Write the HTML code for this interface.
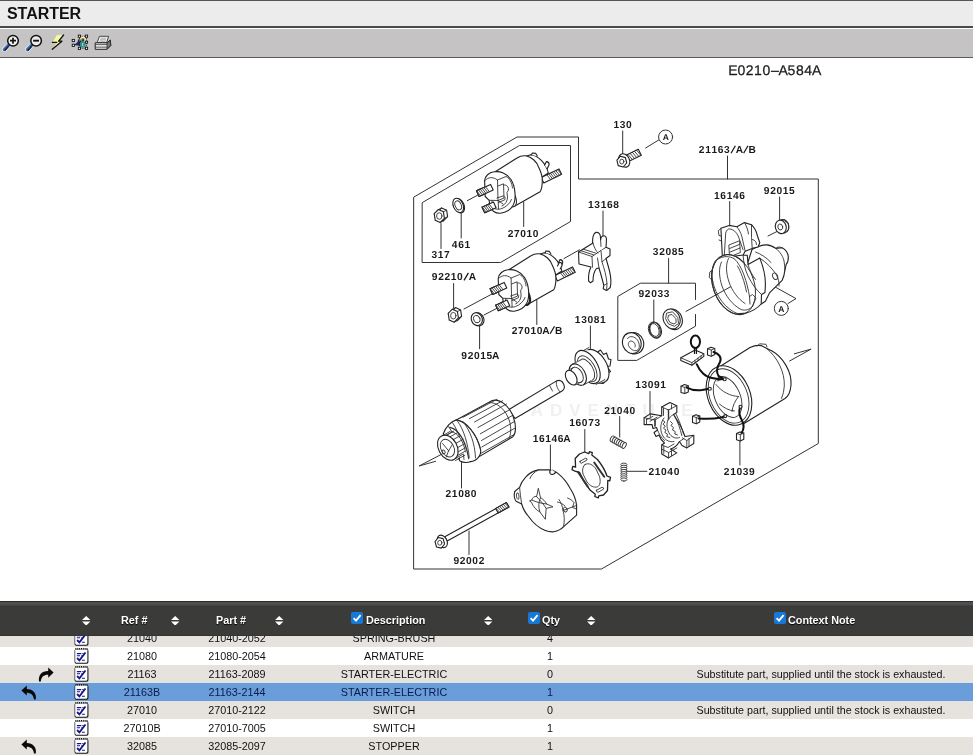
<!DOCTYPE html>
<html>
<head>
<meta charset="utf-8">
<style>
html,body{margin:0;padding:0;background:#fff;}
body{width:973px;height:755px;overflow:hidden;position:relative;font-family:"Liberation Sans",sans-serif;}
#title{position:absolute;left:0;top:0;width:973px;height:28px;background:#ececec;border-top:1px solid #55555a;border-bottom:2px solid #4a4a4c;box-sizing:border-box;}
#title span{position:absolute;left:6.8px;top:4px;font-size:16px;font-weight:bold;color:#111;letter-spacing:-0.05px;line-height:18px;}
#toolbar{position:absolute;left:0;top:29px;width:973px;height:29px;background:#c5c3c4;border-bottom:1px solid #5a5a5a;box-sizing:border-box;}
#diagram{position:absolute;left:0;top:58px;width:973px;height:543px;}
#thead{position:absolute;left:0;top:601px;width:973px;height:35px;background:linear-gradient(#4a4c4a 0,#525452 2px,#454745 3.2px,#3b3c3a 4.2px,#3b3c3a 32.5px,#30312e 34px);border-top:1px solid #2c2d2b;box-sizing:border-box;}
.hl{position:absolute;top:12px;font-size:10.8px;font-weight:bold;color:#fff;line-height:12px;white-space:nowrap;text-shadow:0 1px 1px #000;}
.sort{position:absolute;top:13.9px;width:8.4px;height:9.6px;margin-left:0.3px;}
.cb{position:absolute;top:10px;width:12px;height:12px;}
#rows{position:absolute;left:0;top:636px;width:973px;height:119px;overflow:hidden;}
.row{position:absolute;left:0;width:973px;height:18px;font-size:10.8px;color:#111;line-height:18px;}
.row.g{background:#e6e3df;}
.row.w{background:#fff;}
.row.s{background:#6a9edb;color:#0b1a48;}
.row span{position:absolute;top:0;text-align:center;white-space:nowrap;}
.c1{left:92px;width:100px;}
.c2{left:187px;width:100px;}
.c3{left:294px;width:200px;}
.c4{left:520px;width:60px;}
.c5{left:661px;width:320px;font-size:10.7px;}
.np{position:absolute;left:74px;top:1px;width:15px;height:16px;}
.ar{position:absolute;top:2px;width:16px;height:15px;}
.hl,.row span,#title span,#dg{will-change:transform;}
</style>
</head>
<body>
<svg width="0" height="0" style="position:absolute">
<defs>
<symbol id="np" viewBox="0.5 0.3 13.8 15.2">
<rect x="0.8" y="1.3" width="13.2" height="14" rx="1.6" fill="#111"/>
<rect x="1.4" y="1.6" width="11.6" height="12.6" rx="1" fill="#fff"/>
<path d="M1.6 1.2 H13.4" stroke="#111" stroke-width="1.6" stroke-dasharray="1 0.75"/>
<path d="M1.8 2.4 H13" stroke="#fff" stroke-width="0.7" stroke-dasharray="0.8 0.95"/>
<path d="M3 5.6 H7.2 M3 7.7 H6 M7.8 11.9 H10.6" stroke="#14148c" stroke-width="1.1"/>
<path d="M3.2 9.8 L5.4 12 L11.2 4.6" stroke="#14148c" stroke-width="1.7" fill="none" stroke-linejoin="miter"/>
<path d="M8.2 5.6 H9.4 M7.2 7.7 H8" stroke="#14148c" stroke-width="1"/>
</symbol>
<symbol id="fw" viewBox="0 0 16 15">
<path d="M1 14.4 C0.2 8,4 3.9,10.2 4 L10.2 0.4 L15.6 5.6 L10.2 10.8 L10.2 7.8 C6.2 7.6,3.4 9.6,2.8 14.4 Z" fill="#0a0a0a"/>
</symbol>
<symbol id="bk" viewBox="0 0 16 15">
<path d="M14.8 14.4 C15.8 8.4,12 4.2,5.8 4 L5.8 0.4 L0.4 5.4 L5.8 10.4 L5.8 7.8 C9.6 7.8,12.4 9.8,13 14.4 Z" fill="#0a0a0a"/>
</symbol>
</defs>
</svg>
<div id="title"><span>STARTER</span></div>
<div id="toolbar">
<svg width="120" height="28" viewBox="0 29 120 28" style="position:absolute;left:0;top:0">
<defs>
<linearGradient id="hg" x1="0" y1="0" x2="1" y2="1"><stop offset="0" stop-color="#8db4d8"/><stop offset="0.5" stop-color="#2f5f9a"/><stop offset="1" stop-color="#14224a"/></linearGradient>
</defs>
<!-- zoom in -->
<path d="M8.8 44.6 L4.4 49.4" stroke="#e8eef5" stroke-width="5" stroke-linecap="round"/>
<path d="M8.8 44.6 L4.4 49.4" stroke="url(#hg)" stroke-width="3.4" stroke-linecap="round"/>
<path d="M8.2 46.6 L5.2 50" stroke="#14224a" stroke-width="1.4" stroke-linecap="round"/>
<circle cx="13" cy="40.7" r="5.3" fill="#f2f2f2" stroke="#111" stroke-width="1.5"/>
<path d="M10 40.7 H16 M13 37.7 V43.7" stroke="#111" stroke-width="1.7"/>
<!-- zoom out -->
<path d="M31.9 44.6 L27.5 49.4" stroke="#e8eef5" stroke-width="5" stroke-linecap="round"/>
<path d="M31.9 44.6 L27.5 49.4" stroke="url(#hg)" stroke-width="3.4" stroke-linecap="round"/>
<path d="M31.3 46.6 L28.3 50" stroke="#14224a" stroke-width="1.4" stroke-linecap="round"/>
<circle cx="36.1" cy="40.7" r="5.3" fill="#ececec" stroke="#111" stroke-width="1.5"/>
<path d="M33.2 40.7 H39" stroke="#111" stroke-width="1.9"/>
<!-- lightning -->
<path d="M56.8 35 L63.4 35 L58.6 41 L61.8 41 L52.4 49.2 L56.6 42.6 L52.4 42.6 Z" fill="#f6f9a8" stroke="#d8dc8a" stroke-width="0.6"/>
<path d="M63.6 35 L58.6 41.2 H61.9 L52.3 49.3 M52.4 42.4 H56.8" stroke="#111" stroke-width="1.3" fill="none" stroke-linejoin="round" stroke-linecap="round"/>
<!-- select icon -->
<path d="M79.5 36.3 H86.5 V48.3 H79.5 Z" fill="none" stroke="#222" stroke-width="0.9" stroke-dasharray="1.2 1"/>
<path d="M80.5 37.5 Q83 35.5,85.5 37.5 L85.5 41 L80.5 41 Z" fill="#f3f5b0"/>
<path d="M74 45 L79.5 40.5 L82.5 42 L80.5 46 Z" fill="#1c2566"/>
<path d="M80 42 Q83 40.5,85.5 42.5 L85.5 47 Q82.5 48.5,80 47 Z" fill="#2a8f88"/>
<path d="M83.2 42.8 Q81.8 44.5,83.2 46.4" stroke="#c8ecea" stroke-width="1" fill="none"/>
<g fill="#fff" stroke="#111" stroke-width="0.9">
<rect x="72.2" y="39.4" width="2.2" height="2.2"/><rect x="72.2" y="44.2" width="2.2" height="2.2"/>
<rect x="78.3" y="35.1" width="2.2" height="2.2"/><rect x="85.4" y="35.1" width="2.2" height="2.2"/>
<rect x="78.3" y="47.2" width="2.2" height="2.2"/><rect x="85.4" y="47.2" width="2.2" height="2.2"/>
<rect x="85.6" y="41.2" width="2" height="2"/><rect x="78.3" y="40" width="1.8" height="1.8"/><rect x="82" y="39" width="1.8" height="1.8"/>
</g>
<!-- printer -->
<path d="M99.5 36.3 L108.6 36.3 L106.6 42.6 L97.2 42.6 Z" fill="#fafafa" stroke="#333" stroke-width="0.9"/>
<path d="M100.5 38.2 H106.5 M100 39.8 H106 M99.4 41.2 H105.4" stroke="#888" stroke-width="0.7"/>
<path d="M95.2 42.8 L106.8 42.8 L110.3 40.2 L110.8 45.5 L107 49.3 L95.2 49.3 Z" fill="#e9e9e9" stroke="#222" stroke-width="1"/>
<path d="M106.9 42.9 L107 49.2 L110.7 45.5 L110.3 40.3 Z" fill="#777" stroke="#222" stroke-width="0.8"/>
<path d="M95.4 44.8 H106.8 M95.4 47 H106.8" stroke="#333" stroke-width="1"/>
<path d="M96 45.9 H106.5" stroke="#fff" stroke-width="1"/>
</svg>
</div>
<div id="diagram"><!--SVGSTART--><svg id="dg" width="973" height="543" viewBox="0 58 973 543" style="position:absolute;left:0;top:0">
<defs>
<style>
.l{stroke:#333;stroke-width:1;fill:none;stroke-linecap:round;stroke-linejoin:round}
.p{stroke:#222;stroke-width:1.1;fill:#fff;stroke-linecap:round;stroke-linejoin:round}
.n{stroke:#333;stroke-width:0.9;fill:none;stroke-linecap:round;stroke-linejoin:round}
.k{stroke:#111;stroke-width:2;fill:none;stroke-linecap:round;stroke-linejoin:round}
.t text{font-family:"Liberation Sans",sans-serif;font-size:10.2px;font-weight:bold;fill:#1a1a1a;text-anchor:middle;text-rendering:geometricPrecision}
.tt{font-family:"Liberation Sans",sans-serif;font-size:14px;fill:#1a1a1a;stroke:#1a1a1a;stroke-width:0.25px;text-anchor:middle;text-rendering:geometricPrecision}
.wm{font-family:"Liberation Sans",sans-serif;font-size:17px;font-weight:bold;fill:#f0f0f0;letter-spacing:7px}
</style>
</defs>
<text class="wm" x="495" y="416">LEADVENTURE</text>
<path class="l" d="M414 197 L517 137 H578.5 V179 H818.3 V443.5 L601.5 569 H414 Z"/>
<path class="l" d="M422.5 202.5 L519.5 145.5 H570.5 V221.5 L500.5 262.5 H422.5 Z"/>
<path class="l" d="M695.5 299.5 V283.2 H640.4 L617.8 296.4 V360.4 H636.8 L695.5 326.2 V314.5"/>
<path class="l" d="M622.7 131 V155 M645.6 148 L658.7 140 M727.5 156 V179 M729.7 201.5 V226 M779.6 197 V221.5 M603 211 V236
M523.7 202 V226.5 M461.2 212.5 V238 M441 223.5 V248.5 M467.4 200.6 L477.6 195.2 M668.6 258.5 V283 M453.6 283.5 V308 M653.8 300 V322.5
M536.8 300 V324.5 M590.4 326 V348.5 M479.6 326 V348.7 M464 309 L492 294 M484 315 L496.6 308.5 M650 391.5 V414 M619.7 416.5 V437
M584.8 429.5 V452.5 M550.4 445 V469 M627 471.3 H646.9 M739.9 440 V465 M461.5 462.5 V488 M469 531 V554.5
M765.8 281.8 L796 298.6 L788 303.5 M765.8 281.8 L772.7 277 M563.9 258.6 L579.5 249.8 M768 236 L788 226"/>
<circle class="l" cx="665.6" cy="137" r="7"/>
<circle class="l" cx="781.3" cy="308.4" r="7"/>
<path class="p" d="M628.5 161.6 L641.3 155.2 L638.3 149.2 L625.5 155.6 Z"/><path class="n" d="M630.3 160.7 L625.9 155.5 M632.4 159.6 L628.0 154.4 M634.5 158.5 L630.1 153.3 M636.7 157.5 L632.3 152.3 M638.8 156.4 L634.4 151.2 M640.9 155.3 L636.5 150.1 "/>
<ellipse class="p" cx="624.2" cy="160.4" rx="5.2" ry="7" transform="rotate(-27 624.2 160.4)"/>
<path class="p" d="M626.7 163.0 L623.1 167.0 L618.2 165.6 L616.9 160.2 L620.5 156.2 L625.4 157.6 Z"/><ellipse class="n" cx="621.8" cy="161.6" rx="2.1" ry="2.4"/>
<path class="p" d="M543.8 182.9 L561.6 174.3 L559.0 168.9 L541.2 177.5 Z"/><path class="n" d="M550.7 179.6 L546.8 174.8 M552.5 178.7 L548.6 173.9 M554.2 177.9 L550.3 173.1 M556.0 177.0 L552.1 172.2 M557.8 176.1 L553.9 171.4 M559.6 175.3 L555.7 170.5 M561.4 174.4 L557.5 169.6 "/>
<path class="p" d="M525.5 156.6 L530.5 154.8 C538 155.5,546 163,548.3 173 L542 177 Z"/>
<path class="p" d="M531.5 155 L532.3 153 L535.8 153.4 L537.3 156 M544.6 165.2 L546.4 161.6 Q549.3 161.8,549.1 164.8 L547.3 168.6"/>
<path class="p" d="M489.7 175.2 L517 158 C520 156,523 155.5,525.7 155.8 C532 157,537 162,538.7 167.3 C541 172,542.5 177,542.3 181 C542.3 186,541.5 189.5,540.1 191.7 L514.9 206.1 Z"/>
<path class="p" d="M490.6 184.4 L476.5 190.8 L479.1 196.4 L493.2 190.0 Z"/><path class="n" d="M485.5 186.7 L489.5 191.7 M483.8 187.5 L487.7 192.5 M482.0 188.3 L485.9 193.3 M480.2 189.1 L484.2 194.1 M478.5 189.9 L482.4 194.9 M476.7 190.7 L480.6 195.7 "/>
<path class="p" d="M493.5 202.1 L482.1 207.2 L484.7 212.8 L496.1 207.7 Z"/><path class="n" d="M489.1 204.0 L493.0 209.1 M487.4 204.8 L491.3 209.8 M485.7 205.6 L489.6 210.6 M484.0 206.3 L487.9 211.4 M482.3 207.1 L486.2 212.1 "/>
<ellipse class="p" cx="502.3" cy="190.6" rx="8.5" ry="19.9" transform="rotate(-39 502.3 190.6)" />
<path class="p" d="M494 171.8 C489 172.5,485 176,484.6 180.5 L485.2 196.5 L489.2 200.3 L489.8 206 C491 210.5,495.5 213.6,500.5 213.2 C506 212.5,511 209,513 205.5 C516.5 199,515.5 187,511 179.5 C507 173.5,500 170.8,494 171.8 Z"/>
<path class="n" d="M485 180.5 C488 177,493 176.5,497.5 180 L498 200.5 M497.5 180 L506 176.5 C509.5 178,512 183,512.5 188 M498 186 L503.5 183.8 L504 198 L498.2 200.5 M504 185 C507 184.5,508.5 187,508.5 190 L507 192.5 L507.5 197 C507.5 201,505.5 204.5,502 206 M489.2 200.3 L498 200.5 L503 204 M492 200.5 L492.5 206.5 M498.2 200.5 L498.5 209 M489.8 206 C493 209,498 210,502 208.5 C506 207,510 203.5,511.5 199.5"/>
<path class="p" d="M490.6 184.4 L476.5 190.8 L479.1 196.4 L493.2 190.0 Z"/><path class="n" d="M485.5 186.7 L489.5 191.7 M483.8 187.5 L487.7 192.5 M482.0 188.3 L485.9 193.3 M480.2 189.1 L484.2 194.1 M478.5 189.9 L482.4 194.9 M476.7 190.7 L480.6 195.7 "/>
<path class="p" d="M493.5 202.1 L482.1 207.2 L484.7 212.8 L496.1 207.7 Z"/><path class="n" d="M489.1 204.0 L493.0 209.1 M487.4 204.8 L491.3 209.8 M485.7 205.6 L489.6 210.6 M484.0 206.3 L487.9 211.4 M482.3 207.1 L486.2 212.1 "/>
<path class="n" d="M497 198 L503.5 195.8 Q506 197,504.8 199.8 L498.5 202.5"/>
<ellipse class="p" cx="459.2" cy="205.7" rx="4.9" ry="7.5" transform="rotate(-24.0 459.2 205.7)"/><ellipse class="p" cx="458.2" cy="205.4" rx="4.9" ry="7.5" transform="rotate(-24.0 458.2 205.4)"/><ellipse class="n" cx="458.2" cy="205.4" rx="3.0" ry="4.7" transform="rotate(-24.0 458.2 205.4)"/>
<path class="p" d="M447.6 216.7 L443.4 220.9 L438.4 218.6 L437.4 212.1 L441.6 207.9 L446.6 210.2 Z"/><path class="n" d="M444.4 218.3 L447.6 216.7 M440.2 222.5 L443.4 220.9 M435.2 220.2 L438.4 218.6 M434.2 213.7 L437.4 212.1 M438.4 209.5 L441.6 207.9 M443.4 211.8 L446.6 210.2 "/><path class="p" d="M444.4 218.3 L440.2 222.5 L435.2 220.2 L434.2 213.7 L438.4 209.5 L443.4 211.8 Z"/><ellipse class="n" cx="439.3" cy="216.0" rx="2.7" ry="3.3"/>
<g transform="translate(13.6 98)">
<path class="p" d="M543.8 182.9 L561.6 174.3 L559.0 168.9 L541.2 177.5 Z"/><path class="n" d="M550.7 179.6 L546.8 174.8 M552.5 178.7 L548.6 173.9 M554.2 177.9 L550.3 173.1 M556.0 177.0 L552.1 172.2 M557.8 176.1 L553.9 171.4 M559.6 175.3 L555.7 170.5 M561.4 174.4 L557.5 169.6 "/>
<path class="p" d="M525.5 156.6 L530.5 154.8 C538 155.5,546 163,548.3 173 L542 177 Z"/>
<path class="p" d="M531.5 155 L532.3 153 L535.8 153.4 L537.3 156 M544.6 165.2 L546.4 161.6 Q549.3 161.8,549.1 164.8 L547.3 168.6"/>
<path class="p" d="M489.7 175.2 L517 158 C520 156,523 155.5,525.7 155.8 C532 157,537 162,538.7 167.3 C541 172,542.5 177,542.3 181 C542.3 186,541.5 189.5,540.1 191.7 L514.9 206.1 Z"/>
<path class="p" d="M490.6 184.4 L476.5 190.8 L479.1 196.4 L493.2 190.0 Z"/><path class="n" d="M485.5 186.7 L489.5 191.7 M483.8 187.5 L487.7 192.5 M482.0 188.3 L485.9 193.3 M480.2 189.1 L484.2 194.1 M478.5 189.9 L482.4 194.9 M476.7 190.7 L480.6 195.7 "/>
<path class="p" d="M493.5 202.1 L482.1 207.2 L484.7 212.8 L496.1 207.7 Z"/><path class="n" d="M489.1 204.0 L493.0 209.1 M487.4 204.8 L491.3 209.8 M485.7 205.6 L489.6 210.6 M484.0 206.3 L487.9 211.4 M482.3 207.1 L486.2 212.1 "/>
<ellipse class="p" cx="502.3" cy="190.6" rx="8.5" ry="19.9" transform="rotate(-39 502.3 190.6)" style="stroke-width:2.2"/>
<path class="p" d="M494 171.8 C489 172.5,485 176,484.6 180.5 L485.2 196.5 L489.2 200.3 L489.8 206 C491 210.5,495.5 213.6,500.5 213.2 C506 212.5,511 209,513 205.5 C516.5 199,515.5 187,511 179.5 C507 173.5,500 170.8,494 171.8 Z"/>
<path class="n" d="M485 180.5 C488 177,493 176.5,497.5 180 L498 200.5 M497.5 180 L506 176.5 C509.5 178,512 183,512.5 188 M498 186 L503.5 183.8 L504 198 L498.2 200.5 M504 185 C507 184.5,508.5 187,508.5 190 L507 192.5 L507.5 197 C507.5 201,505.5 204.5,502 206 M489.2 200.3 L498 200.5 L503 204 M492 200.5 L492.5 206.5 M498.2 200.5 L498.5 209 M489.8 206 C493 209,498 210,502 208.5 C506 207,510 203.5,511.5 199.5"/>
<path class="p" d="M490.6 184.4 L476.5 190.8 L479.1 196.4 L493.2 190.0 Z"/><path class="n" d="M485.5 186.7 L489.5 191.7 M483.8 187.5 L487.7 192.5 M482.0 188.3 L485.9 193.3 M480.2 189.1 L484.2 194.1 M478.5 189.9 L482.4 194.9 M476.7 190.7 L480.6 195.7 "/>
<path class="p" d="M493.5 202.1 L482.1 207.2 L484.7 212.8 L496.1 207.7 Z"/><path class="n" d="M489.1 204.0 L493.0 209.1 M487.4 204.8 L491.3 209.8 M485.7 205.6 L489.6 210.6 M484.0 206.3 L487.9 211.4 M482.3 207.1 L486.2 212.1 "/>
<path class="n" d="M497 198 L503.5 195.8 Q506 197,504.8 199.8 L498.5 202.5"/>
</g>
<path class="p" d="M557.5 266 L559.5 262.3 Q562.3 262.5,562.1 265.5 L560.2 269" />
<path class="p" d="M461.6 316.4 L457.4 320.6 L452.4 318.3 L451.4 311.8 L455.6 307.6 L460.6 309.9 Z"/><path class="n" d="M458.4 318.0 L461.6 316.4 M454.2 322.2 L457.4 320.6 M449.2 319.9 L452.4 318.3 M448.2 313.4 L451.4 311.8 M452.4 309.2 L455.6 307.6 M457.4 311.5 L460.6 309.9 "/><path class="p" d="M458.4 318.0 L454.2 322.2 L449.2 319.9 L448.2 313.4 L452.4 309.2 L457.4 311.5 Z"/><ellipse class="n" cx="453.3" cy="315.7" rx="2.7" ry="3.3"/>
<ellipse class="p" cx="478.4" cy="319.4" rx="5.4" ry="6.6" transform="rotate(-20.0 478.4 319.4)"/><ellipse class="p" cx="476.8" cy="319.1" rx="5.4" ry="6.6" transform="rotate(-20.0 476.8 319.1)"/><ellipse class="n" cx="476.8" cy="319.1" rx="3.1" ry="3.8" transform="rotate(-20.0 476.8 319.1)"/>
<path class="p" d="M593 243 L578.5 252 L579 264 L591 267 C589 271,588.3 277,588.6 281 L590.5 282.8 L593 281 C593 276,594 271.5,596.5 268.5 L599 268 C600.5 273,602.5 280,603.8 285.5 L603.2 288.8 L606.6 290.6 L610.2 287.5 C611.3 283,611 277,609.5 271 C608.3 266,607 262,606 258.5 L610 255.5 L610 249 L606 247.3 L606.4 241 C606.8 238,605.8 236,603.8 235.8 C602 235.8,600.9 237.5,600.6 240 L600.4 236.4 C600.3 234,598.6 232,596 232.4 C593.4 233,592.2 238,592.6 243 Z" />
<path class="n" d="M578.5 252 L592 256.5 L592.5 267.2 M592 256.5 L601 250.5 M593 243 C594 247,596 251,597.8 253 M581 250.8 L593.5 254.8 M583.5 249.3 L595.5 253 M597.5 258 L599 268 M601 250.5 L602 262 L606 258.5 M606 247.3 L602.5 249.5 M600.6 240 L601 246.5 M603.8 285.5 L607 283.5 L606.6 290.6 M602 262 C604 268,606.5 276,607 283.5" />
<path class="p" d="M597 352.5 L600.5 350 L603.5 354.5 L606.5 353 L608.5 359 L611 359.5 L610 366 L607 366.5 L610.5 371.5 L607 373.5 L607 380 L603 383.5 L597 383 Z" />
<ellipse class="p" cx="596.5" cy="365.8" rx="10.0" ry="18.0" transform="rotate(-30.0 596.5 365.8)" />
<path class="p" d="M579.3 351.6 L588.5 350 L605.5 381 L597 383.5 Z" style="stroke:none"/>
<path class="n" d="M580 352.5 L589 347.5 M596 384.5 L605 379.5" />
<ellipse class="p" cx="587.6" cy="367.0" rx="10.0" ry="18.3" transform="rotate(-30.0 587.6 367.0)" />
<ellipse class="n" cx="587.2" cy="368.8" rx="7.8" ry="14.3" transform="rotate(-30.0 587.2 368.8)" />
<ellipse class="n" cx="586.6" cy="369.8" rx="6.3" ry="11.8" transform="rotate(-30.0 586.6 369.8)" />
<path class="p" d="M572 363.8 L582.5 358.5 L592 380.5 L583.5 385.5 Z" style="stroke:none"/>
<path class="n" d="M572.2 364.2 L582.5 359.2 M583.5 385 L591 380.8" />
<ellipse class="p" cx="577.8" cy="374.6" rx="7.4" ry="11.6" transform="rotate(-30.0 577.8 374.6)" />
<path class="p" d="M567 370.5 L573.5 367 L581 382.5 L575.5 385 Z" style="stroke:none"/>
<path class="n" d="M567.3 370.8 L574 367.3 M575.5 384.8 L581.5 381.8" />
<ellipse class="n" cx="577.2" cy="374.9" rx="5.2" ry="8.4" transform="rotate(-30.0 577.2 374.9)" />
<ellipse class="p" cx="571.2" cy="377.6" rx="5.0" ry="8.0" transform="rotate(-30.0 571.2 377.6)" />
<path class="p" d="M509 409.5 L556.6 380.9 C559.5 379.5,562.3 381,563.6 384 C565 387,564.3 389.6,562 391 L515 418.5 Z" />
<path class="n" d="M549.5 385.3 L552.5 391 M556.6 380.9 C555.5 383.5,557 388.5,560 391.8" />
<path class="p" d="M456.3 419.9 L492.3 400.5 C500 398.5,509.5 406,513.5 417.5 C516.5 426,516 433.5,512.9 436.7 L470.7 461.6 Z" />
<path class="n" d="M488.5 402.6 C497 401.5,506 410,509.5 421 C511.5 428,511 435,508.8 439" />
<path class="n" d="M463.0 417.3 L497.0 399.3 M469.5 418.6 L502.5 400.8 M474.5 422.0 L506.5 404.0 M478.0 427.5 L510.0 409.5 M480.3 433.8 L512.8 415.3 M481.5 440.5 L514.5 421.5 M481.8 447.0 L515.2 428.0 M480.5 453.6 L514.2 434.5 " />
<path class="p" d="M456.3 419.9 C466 421,477 434,480.6 449.7 C481.5 456,476 461.5,470.7 461.6 C467 463,463 462.6,460 461 L443.2 434 C445.5 427,451 421.5,456.3 419.9 Z" />
<path class="n" d="M457.7 421.4 C464 430,468 444,469.2 457.5 M452.5 422.6 C459 432,463 446,464 459.5 M463 421.6 C470.5 431,475 444,475.5 458 M448.5 426.5 C455.5 436,459 448,459.5 460.3 M456.3 419.9 C466 421,477 434,480.6 449.7" />
<path class="n" d="M449.8 427.3 C458 428.5,465.5 440,468.7 458.6" style="stroke-width:1.2"/>
<path class="p" d="M441.5 438.5 L452 431.8 C458 433,463.5 441,465.5 452 L455.5 460.5 Z" style="stroke:none"/>
<path class="n" d="M441.8 438.3 L452 431.8 M455.5 460.5 L464.8 455.2 M452 431.8 C458 433,463.5 441,465.5 452" />
<path class="n" d="M443.1 435.4 l7.2 -4.1 M446.5 435.3 l7.2 -4.1 M450.1 436.8 l7.2 -4.1 M453.4 439.6 l7.2 -4.1 M456.0 443.3 l7.2 -4.1 M457.7 447.6 l7.2 -4.1 M458.1 451.9 l7.2 -4.1 M457.3 455.7 l7.2 -4.1 M455.4 458.5 l7.2 -4.1 " />
<ellipse class="p" cx="447.8" cy="447.7" rx="9.3" ry="13.3" transform="rotate(-28.0 447.8 447.7)" />
<ellipse class="n" cx="447.4" cy="448.1" rx="6.4" ry="9.4" transform="rotate(-28.0 447.4 448.1)" />
<path class="n" d="M442.6 443.5 L448.6 450.8 M448.6 450.8 L452.3 444.6 M448.6 450.8 L446.2 457" />
<ellipse class="n" cx="443.6" cy="451.9" rx="1.4" ry="2.0" transform="rotate(-28.0 443.6 451.9)" />
<path class="l" d="M442.1 454 L419.1 466 L435.6 461.3" />
<path class="p" d="M550.9 469.9 L538.4 469.9 C533 471,528.5 474,525.9 476.9 C522.5 480.5,520.5 484,519.6 487.3 L514.7 491.5 C513.8 495,514.5 499,516.1 501.2 L521.7 504 C523 509,525.5 513,528.6 516.5 C533 523,539 528,545.3 530.4 C548 531.5,551 532,553.7 531.8 C557.5 531,561 529.5,563.4 526.9 L576.6 515.1 L576.6 505.4 C576 499.5,573.8 494,570.4 488.7 C567 482.5,562.5 477,557.9 473.4 L555.5 471.8 C555 474.5,551.5 475.3,550.2 473.5 C549.5 472,549.8 470.5,550.9 469.9 Z" />
<path class="n" d="M555.5 471.8 L552.8 470.2 M563.4 526.9 C564.8 521.5,564.5 515.5,563 510.5 L576.6 505.4 M538.4 469.9 C534 472,531 475.5,530 478.5 M563 510.5 C562.5 506,561 502.5,559 499.5" />
<path class="n" d="M519.6 487.3 C520 492,520.8 498.5,521.7 504 M516.7 493.5 C516 495.5,516.5 498.5,518 499.5 C519.2 499.5,519.3 495,518.3 493.3 Z" />
<path class="n" d="M538.4 488.7 L540.5 497.6 C543 499,545.3 501.5,546.6 504 L553 506.8 L546.2 508.4 L545.3 519.3 L539.8 511.8 C536.5 510.5,533 506.5,531.5 502.3 L529.5 501 L531.8 500 C532.5 497.5,534.2 496.2,536.3 496.3 Z" />
<path class="n" d="M536.3 496.3 C539.5 499.5,543 503.5,546.2 508.4 M540.5 497.6 C538.5 502,538.2 507,539.8 511.8 M531.8 500 C536 502,541.5 503.5,546.6 504" />
<path class="n" d="M557.5 502 C560 502.5,563 504,565 506 M567.5 498 C570 499,572.5 500.5,574 502.5 L572.5 507.5 L576.6 509" />
<ellipse class="n" cx="565.3" cy="509.6" rx="1.8" ry="2.6" transform="rotate(-20.0 565.3 509.6)" />
<path class="p" d="M584.5 452 L588.8 453.7 L589.5 451.6 L592.3 452.7 L591.8 455 L597.5 459.5 C601.5 464.5,605 470,607 476 L610.5 477.3 L609.8 480.8 L607.8 480.3 L607.5 490.5 L603.5 495 L598.8 495.8 L598.3 497.8 L594.8 496.5 L595.3 494.3 L590 490 C586 485,582 478.5,579.6 472.5 L575 471.2 L572 469.6 L572.8 466.3 L575.6 467 L575.2 458.5 L579.5 454 Z" style="stroke-width:1.3"/>
<path class="n" d="M585 464.5 C588.5 462.5,593 464.5,596 469 L599.5 476.5 C600.8 481.5,600.2 485.5,597.5 486.8 C594 488,590 486,587 482 L583 474 C582 470,582.8 466,585 464.5 Z" />
<path class="n" d="M580 461.3 L585.5 458.2 Q587.5 458.2,587 460 L581.5 463.2 Q579.5 463.3,580 461.3 Z M596.5 490.2 L602 487.3 Q604 487.3,603.5 489.2 L598 492.3 Q596 492.3,596.5 490.2 Z" />
<path class="n" d="M594.2 462.5 L604.2 476.8 M578 472 L587.6 486.4" style="stroke-width:2;stroke:#333"/>
<path class="p" d="M661.7 407 L669.9 402.6 L676.8 405.7 L676.8 412.6 L673.5 414.5 C678 421,682.5 429,685 436.5 L693.8 435.3 L693.8 443.5 L686.8 447.9 L682 445.5 L679.5 441.5 C677.5 445,674 448,670.5 449 L676.8 452.9 L668.6 457.9 L661.7 454 L661.7 445 L664.5 443 C662 441,660 438,659 435 L656 436.5 L654 432.5 L657.5 430 L656.5 427.5 L653 428.5 L652 424.5 L644.1 424.6 L644.1 417.7 L650.3 413.9 L661.7 415.8 Z" />
<path class="n" d="M661.7 407 L668.5 410 L676.8 405.7 M668.5 410 L668.5 418.5 M644.1 417.7 L655 420 L661.7 415.8 M655 420 L655 426 M647 419.5 L653 416.3 M650 421.3 L657 417.2 M682.4 437.8 L686.8 440.5 L693.8 435.3 M686.8 440.5 L686.8 447.9 M661.7 449.1 L668.6 452.5 L668.6 457.9 M668.6 452.5 L676.8 448 M661.7 445 L668 447.5 L674 444" />
<path class="n" d="M664 418 C660 423,659.5 431,663.5 437 C666 440.5,670 442.5,674 441.5 M668.5 418.5 C666 423,666.5 429.5,670 434.5 C672.5 437.5,676 439,679.5 437.5 M673.5 414.5 C670.5 416,669 418,668.5 420" />
<path class="n" d="M663 420.5 L665 422 L663 424.2 L665.3 426 L663.5 428.3 L666 430 L664.8 432.5 L667.5 434 L666.8 436.5 L669.8 437.5 M670.5 421.5 L672.5 423.5 L671 425.5 L673.5 427.5 L672.5 430 L675.2 431.5 L674.8 434 L677.5 435" />
<path class="n" d="M676 414 C679 420,682 428,683.5 434 M679.5 441.5 L684 438.5" />
<path class="n" d="M663.5 408.2 L663.5 415.5 M671.5 404.8 L671.5 409 M646.5 419 L646.5 424.5 M650.3 413.9 L650.3 417 M663.8 446 L663.8 453.5 M671.5 455.5 L671.5 450.5 M689 438.5 L689 446.3 M657.5 430 C659 434,661.5 438,664.5 440.5 M674.5 416 C677.5 421.5,680.5 429,681.8 435.5" />
<path class="n" d="M668.5 410 L668.5 418.5 M655 420 L655 426" style="stroke-width:1.4"/>
<ellipse class="n" cx="612.3" cy="438.9" rx="1.7" ry="3.2" transform="rotate(28.7 612.3 438.9)" style="fill:#fff"/><ellipse class="n" cx="614.3" cy="440.0" rx="1.7" ry="3.2" transform="rotate(28.7 614.3 440.0)" style="fill:#fff"/><ellipse class="n" cx="616.3" cy="441.1" rx="1.7" ry="3.2" transform="rotate(28.7 616.3 441.1)" style="fill:#fff"/><ellipse class="n" cx="618.2" cy="442.2" rx="1.7" ry="3.2" transform="rotate(28.7 618.2 442.2)" style="fill:#fff"/><ellipse class="n" cx="620.2" cy="443.3" rx="1.7" ry="3.2" transform="rotate(28.7 620.2 443.3)" style="fill:#fff"/><ellipse class="n" cx="622.2" cy="444.4" rx="1.7" ry="3.2" transform="rotate(28.7 622.2 444.4)" style="fill:#fff"/><ellipse class="n" cx="624.2" cy="445.5" rx="1.7" ry="3.2" transform="rotate(28.7 624.2 445.5)" style="fill:#fff"/>
<ellipse class="n" cx="623.9" cy="464.7" rx="1.6" ry="3.1" transform="rotate(90.0 623.9 464.7)" style="fill:#fff"/><ellipse class="n" cx="623.9" cy="466.8" rx="1.6" ry="3.1" transform="rotate(90.0 623.9 466.8)" style="fill:#fff"/><ellipse class="n" cx="623.9" cy="468.9" rx="1.6" ry="3.1" transform="rotate(90.0 623.9 468.9)" style="fill:#fff"/><ellipse class="n" cx="623.9" cy="471.0" rx="1.6" ry="3.1" transform="rotate(90.0 623.9 471.0)" style="fill:#fff"/><ellipse class="n" cx="623.9" cy="473.2" rx="1.6" ry="3.1" transform="rotate(90.0 623.9 473.2)" style="fill:#fff"/><ellipse class="n" cx="623.9" cy="475.3" rx="1.6" ry="3.1" transform="rotate(90.0 623.9 475.3)" style="fill:#fff"/><ellipse class="n" cx="623.9" cy="477.4" rx="1.6" ry="3.1" transform="rotate(90.0 623.9 477.4)" style="fill:#fff"/><ellipse class="n" cx="623.9" cy="479.5" rx="1.6" ry="3.1" transform="rotate(90.0 623.9 479.5)" style="fill:#fff"/>
<path class="p" d="M720 366.5 L750 347.5 Q756 344.8,761 345.6 L772 351 C783 357,792 372,791 385 C790.5 392,788 396.5,785 398.5 L744 423.5 Z" />
<path class="n" d="M766.5 348.5 C777 356.5,785 372,784.3 386 Q784 393,781.5 398.5 M757.5 346 L759.5 343.8 L766 344.3 L767 346.8" />
<ellipse class="p" cx="729.0" cy="395.5" rx="21.0" ry="31.0" transform="rotate(-23.0 729.0 395.5)" />
<ellipse class="n" cx="728.6" cy="395.9" rx="18.6" ry="28.4" transform="rotate(-23.0 728.6 395.9)" />
<ellipse class="n" cx="727.6" cy="397.0" rx="12.6" ry="21.5" transform="rotate(-23.0 727.6 397.0)" />
<path class="n" d="M717 381 L724.5 378.5 M716 384.5 C722 392,730 396,738.5 396.5 M738.5 396.5 C735 401,732.5 406,732 411.5 M719.5 404 C724 408,729 410.5,734.5 411" />
<path class="l" d="M789.6 361 L811.1 349.1 L794.4 353.8" />
<path class="p" d="M680.8 357.8 L695.1 349.9 L703.8 353.8 L703.8 356.4 L691.9 365.2 L680.8 360.4 Z" />
<path class="n" d="M680.8 357.8 L691.9 362.6 L703.8 353.8 M691.9 362.6 L691.9 365.2 M695 360.5 L695 363 M698 358.2 L698 360.8 M701 356 L701 358.6" />
<ellipse class="k" cx="695.4" cy="341.7" rx="4.6" ry="6.2" transform="rotate(0.0 695.4 341.7)" />
<path class="k" d="M694.5 347.5 L694.5 353.5 M696.4 347.5 L696.4 353.5" style="stroke-width:1.2"/>
<path class="p" d="M707.5 348.8 l3.5 -1.6 l3.8 1.2 l0 6.2 l-3.5 1.6 l-3.8 -1.2 Z" /><path class="n" d="M707.5 348.8 l3.8 1.2 l0 6.2 M711.3 350.0 l3.5 -1.6" />
<path class="p" d="M681.0 386.2 l3.5 -1.6 l3.8 1.2 l0 6.2 l-3.5 1.6 l-3.8 -1.2 Z" /><path class="n" d="M681.0 386.2 l3.8 1.2 l0 6.2 M684.8 387.4 l3.5 -1.6" />
<path class="p" d="M692.5 416.3 l3.5 -1.6 l3.8 1.2 l0 6.2 l-3.5 1.6 l-3.8 -1.2 Z" /><path class="n" d="M692.5 416.3 l3.8 1.2 l0 6.2 M696.3 417.5 l3.5 -1.6" />
<path class="p" d="M736.5 433.5 l3.5 -1.6 l3.8 1.2 l0 6.2 l-3.5 1.6 l-3.8 -1.2 Z" /><path class="n" d="M736.5 433.5 l3.8 1.2 l0 6.2 M740.3 434.7 l3.5 -1.6" />
<path class="k" d="M696.7 364.2 C700 372,706 377.5,712 378 C717 379,721 379.5,724.5 379.3" />
<path class="k" d="M713.5 352 C719 353.5,722 357.5,720 362 C717 367,716 372,718.5 376 L724.5 379.3" />
<path class="k" d="M686.8 387.6 C691 389.8,697 390.6,702 390 L709.4 388.8" />
<path class="k" d="M698.5 418.4 C706 419.2,715 418.8,722 417.2 L725 416.2" />
<path class="k" d="M741.5 433 C744 429.5,744 424.5,742 420.5 C739.8 416.5,738.6 412.5,739.6 409 L740.4 407.1" />
<circle class="p" cx="724.7" cy="379.2" r="1.5"/>
<circle class="p" cx="709.8" cy="388.7" r="1.5"/>
<circle class="p" cx="725.3" cy="416.1" r="1.5"/>
<circle class="p" cx="740.5" cy="406.8" r="1.5"/>
<path class="p" d="M752 249.5 C757 246.5,762 244.8,766.8 244.9 C770 245,773 246.5,775.8 248.4 L782.1 247.7 C785.5 249.5,788 253,788.3 256.7 C788.5 260,787.5 262.8,786.2 264.4 L784.8 270.6 C784.5 274,783.5 277.5,782.1 280.4 L769.5 292.9 L765.4 301.2 L761.2 304 L750 308 L745 285 L748 262 Z" />
<path class="n" d="M775.8 248.4 C780 251.5,783.5 257,784.2 262 C784.6 265,784.8 268,784.8 270.6 M775.8 248.4 C776.5 246.8,779.5 246.5,782.1 247.7 M759.8 258.1 C766 262,772.5 268.5,776.5 275 C778.5 279,779.5 283,779 286 M755.6 252 C761 254,767 258,771 262.5" />
<ellipse class="n" cx="775.1" cy="276.2" rx="2.4" ry="3.4" transform="rotate(-25.0 775.1 276.2)" />
<path class="p" d="M720.9 228.2 L729.2 225.4 L736.9 226.8 L744.5 222.6 L751.5 224.7 C754.5 228,756.5 231.5,757 234.5 L759.8 242.8 L758 247 L752.2 248.4 L745.2 251.2 L743.1 255 L729.9 256.7 L722.3 255.3 Z" />
<path class="n" d="M724.3 255.3 L725.7 233 C726.5 230,728 228.9,729.9 228.9 C733 229.3,736.5 232,738.2 235.9 L743.1 249.8 M736.9 226.8 C739 229.5,740.7 232.5,741.7 235.9 L745.2 251.2 M751.5 224.7 L751.5 237.3 L752.2 248.4 M744.5 222.6 C746.5 226,748 230,748.5 234 M729.2 244.9 L739.6 240.7 L740.3 252.6 L729.9 256.7 Z M729.6 248.5 L739.8 244.3 M729.8 252.2 L740 248 M720.9 228.2 L718.3 231 L719 235.5 L721.2 236 M719 240 L721.5 241 M752.5 239.5 C755 240,756.5 242,756.5 244.5" />
<ellipse class="p" cx="733.6" cy="284.6" rx="20.5" ry="31.0" transform="rotate(-20.0 733.6 284.6)" />
<path class="p" d="M743.1 255.3 L747.3 255.3 L748 264.4 L759.8 258.1 C763 266,765.5 276,765.4 284.5 L765 292.5 L761.5 294.5 L761.2 304 C757.5 308,752 311.5,746 313 L737.6 313.7 L746 296 L748 276 Z" style="stroke:none"/>
<path class="n" d="M743.1 255.3 L747.3 255.3 L748 264.4 L759.8 258.1 C763 266,765.5 276,765.4 284.5 L765 292.5 L761.5 294.5 L761.2 304 C757.5 308,752 311.5,746 313 L737.6 313.7" style="stroke-width:1.1;stroke:#222"/>
<ellipse class="n" cx="733.6" cy="284.6" rx="20.5" ry="31.0" transform="rotate(-20.0 733.6 284.6)" />
<path class="n" d="M715.3 260.9 C712 266,711.5 274,712.5 280.4 C715.5 296,726 309.5,737.6 313.7 M718.5 258.8 C723 256,729 255.8,734 258.5 M721.5 262 C718.5 268,719 277,722 286 C725.5 296,732.5 305,741 309.5 C745.5 311,749.5 309.5,752.5 306.5 M728.5 258.5 C725.5 264,726 273,729 282 C732 291,738 299,745 303.5 M734 258.5 C738 262,741.5 268,744 275 C746.5 282,748.5 290,749.5 296.5 M737.5 266 C740.5 271,744.5 281,746.5 292 M749.5 296.5 L752.5 294.5 L756 298 L752.5 306.5 M749.5 296.5 L750 304 M743.1 255.3 C743.5 262,745 270,748 276 C751.5 283,756 290,761.5 294.5 M748 264.4 C749.5 270,752 275,755.5 279.5 M712.5 270 L709.8 272 L709.2 277.5 L713 281" />
<path class="l" d="M686 311.4 L730.7 286.7" />
<ellipse class="p" cx="655.4" cy="330.2" rx="5.8" ry="8.1" transform="rotate(-18.0 655.4 330.2)" />
<ellipse class="n" cx="654.4" cy="329.9" rx="5.8" ry="8.1" transform="rotate(-18.0 654.4 329.9)" />
<ellipse class="n" cx="654.6" cy="330.0" rx="4.4" ry="6.6" transform="rotate(-18.0 654.6 330.0)" />
<ellipse class="p" cx="673.4" cy="319.3" rx="8.6" ry="10.6" transform="rotate(-25.0 673.4 319.3)" />
<ellipse class="p" cx="671.6" cy="318.9" rx="8.2" ry="10.2" transform="rotate(-25.0 671.6 318.9)" />
<path class="n" d="M667 313 L672.5 311.8 L677.8 317.5 L678.5 323.5 L674.5 326.3 L668.5 324 L665.8 319 Z M668.8 315.2 L672 314.5 L675.8 318.5 L676.2 322.5 L674 324 L670 322.5 L668 319 Z" />
<ellipse class="p" cx="634.0" cy="343.2" rx="9.6" ry="10.8" transform="rotate(-20.0 634.0 343.2)" />
<ellipse class="p" cx="631.8" cy="343.1" rx="9.2" ry="10.6" transform="rotate(-20.0 631.8 343.1)" />
<path class="n" d="M627.5 338.5 C629.5 335.5,634.5 336,637.5 340 C640 344,640 349,637 350.5 C634 351.5,630 349,628.5 345.5 C627.8 342.5,629.5 340.5,632 341.2 C634.5 342,636 345,635 347" />
<ellipse class="p" cx="783.6" cy="226.2" rx="5.2" ry="6.6" transform="rotate(-15.0 783.6 226.2)" />
<path class="n" d="M780.5 220.3 L784.5 219.7 M782 233.4 L785.5 232.6" />
<ellipse class="p" cx="780.8" cy="226.9" rx="5.4" ry="6.8" transform="rotate(-15.0 780.8 226.9)" />
<ellipse class="n" cx="780.3" cy="227.0" rx="2.4" ry="3.0" transform="rotate(-15.0 780.3 227.0)" />
<path class="n" d="M785.5 221.5 L788.3 223 L788.8 229 L786.5 231.5" />
<path class="p" d="M447.2 540.9 L508.9 506.9 L506.5 502.7 L444.8 536.7 Z"/>
<path class="p" d="M498.2 513.0 L509.0 507.1 L506.4 502.5 L495.6 508.5 Z"/><path class="n" d="M499.6 512.2 L496.0 508.3 M501.4 511.2 L497.8 507.3 M503.2 510.2 L499.6 506.3 M505.0 509.3 L501.4 505.3 M506.8 508.3 L503.2 504.3 M508.6 507.3 L505.0 503.3 "/>
<ellipse class="p" cx="442.3" cy="541.4" rx="4.6" ry="6.6" transform="rotate(-28.0 442.3 541.4)" />
<path class="p" d="M444.6 544.0 L441.3 548.1 L436.5 547.0 L435.0 541.6 L438.3 537.5 L443.1 538.6 Z"/><ellipse class="n" cx="439.8" cy="542.8" rx="2.1" ry="2.4"/>
<text class="tt" x="732.9 741.3 749.6 758.0 766.4 774.8 783.1 791.5 799.9 808.2 816.6" y="74.8">E0210–A584A</text>
<g class="t">
<text x="616.3 622.6 628.9" y="127.8">130</text>
<text x="701.7 708.0 714.3 720.6 726.9 733.2 739.5 745.8 752.1" y="153.0">21163 A B</text><path d="M731.0 153.2 L735.4 145.7 M743.6 153.2 L748.0 145.7 " stroke="#1a1a1a" stroke-width="1.25" fill="none"/>
<text x="716.9 723.2 729.5 735.8 742.1" y="198.6">16146</text>
<text x="766.7 773.0 779.3 785.6 791.9" y="194.0">92015</text>
<text x="590.9 597.2 603.5 609.8 616.1" y="208.0">13168</text>
<text x="510.5 516.8 523.1 529.4 535.7" y="237.1">27010</text>
<text x="454.7 461.0 467.3" y="247.8">461</text>
<text x="434.3 440.6 446.9" y="258.2">317</text>
<text x="655.7 662.0 668.3 674.6 680.9" y="255.4">32085</text>
<text x="434.7 441.0 447.3 453.6 459.9 466.2 472.5" y="280.2">92210 A</text><path d="M464.0 280.4 L468.4 272.9 " stroke="#1a1a1a" stroke-width="1.25" fill="none"/>
<text x="641.4 647.7 654.0 660.3 666.6" y="297.0">92033</text>
<text x="514.5 520.8 527.1 533.4 539.7 546.0 552.3 558.6" y="333.6">27010A B</text><path d="M550.1 333.8 L554.5 326.3 " stroke="#1a1a1a" stroke-width="1.25" fill="none"/>
<text x="577.7 584.0 590.3 596.6 602.9" y="323.2">13081</text>
<text x="464.2 470.5 476.8 483.1 489.4 495.7" y="359.0">92015A</text>
<text x="638.0 644.3 650.6 656.9 663.2" y="388.3">13091</text>
<text x="607.1 613.4 619.7 626.0 632.3" y="413.9">21040</text>
<text x="572.1 578.4 584.7 591.0 597.3" y="426.4">16073</text>
<text x="535.5 541.8 548.1 554.4 560.7 567.0" y="442.2">16146A</text>
<text x="651.3 657.6 663.9 670.2 676.5" y="475.0">21040</text>
<text x="726.7 733.0 739.3 745.6 751.9" y="475.0">21039</text>
<text x="448.4 454.7 461.0 467.3 473.6" y="497.0">21080</text>
<text x="456.3 462.6 468.9 475.2 481.5" y="564.2">92002</text>
<text x="665.7" y="140.2" style="font-size:8.5px">A</text>
<text x="781.4" y="311.6" style="font-size:8.5px">A</text>
</g>
</svg><!--SVGEND--></div>
<div id="thead">
  <svg class="sort" style="left:82px" viewBox="0 0 9 11" preserveAspectRatio="none"><path d="M4.5 0 L9 4.6 H0Z M4.5 11 L9 6.4 H0Z" fill="#fff"/></svg>
  <span class="hl" style="left:121px">Ref #</span>
  <svg class="sort" style="left:171px" viewBox="0 0 9 11" preserveAspectRatio="none"><path d="M4.5 0 L9 4.6 H0Z M4.5 11 L9 6.4 H0Z" fill="#fff"/></svg>
  <span class="hl" style="left:216px">Part #</span>
  <svg class="sort" style="left:275px" viewBox="0 0 9 11" preserveAspectRatio="none"><path d="M4.5 0 L9 4.6 H0Z M4.5 11 L9 6.4 H0Z" fill="#fff"/></svg>
  <svg class="cb" style="left:351px" viewBox="0 0 12 12"><rect width="12" height="12" rx="2" fill="#1878d8"/><path d="M2.6 6.2 L5 8.6 L9.6 3.2" stroke="#fff" stroke-width="1.8" fill="none"/></svg><span class="hl" style="left:365.5px">Description</span>
  <svg class="sort" style="left:484px" viewBox="0 0 9 11" preserveAspectRatio="none"><path d="M4.5 0 L9 4.6 H0Z M4.5 11 L9 6.4 H0Z" fill="#fff"/></svg>
  <svg class="cb" style="left:528px" viewBox="0 0 12 12"><rect width="12" height="12" rx="2" fill="#1878d8"/><path d="M2.6 6.2 L5 8.6 L9.6 3.2" stroke="#fff" stroke-width="1.8" fill="none"/></svg><span class="hl" style="left:542px">Qty</span>
  <svg class="sort" style="left:587px" viewBox="0 0 9 11" preserveAspectRatio="none"><path d="M4.5 0 L9 4.6 H0Z M4.5 11 L9 6.4 H0Z" fill="#fff"/></svg>
  <svg class="cb" style="left:774px" viewBox="0 0 12 12"><rect width="12" height="12" rx="2" fill="#1878d8"/><path d="M2.6 6.2 L5 8.6 L9.6 3.2" stroke="#fff" stroke-width="1.8" fill="none"/></svg><span class="hl" style="left:788px">Context Note</span>
</div>
<div id="rows">
  <div class="row g" style="top:-7px"><svg class="np"><use href="#np"/></svg><span class="c1">21040</span><span class="c2">21040-2052</span><span class="c3">SPRING-BRUSH</span><span class="c4">4</span></div>
  <div class="row w" style="top:11px"><svg class="np"><use href="#np"/></svg><span class="c1">21080</span><span class="c2">21080-2054</span><span class="c3">ARMATURE</span><span class="c4">1</span></div>
  <div class="row g" style="top:29px"><svg class="np"><use href="#np"/></svg><svg class="ar" style="left:37.5px;top:1.5px"><use href="#fw"/></svg><span class="c1">21163</span><span class="c2">21163-2089</span><span class="c3">STARTER-ELECTRIC</span><span class="c4">0</span><span class="c5">Substitute part, supplied until the stock is exhausted.</span></div>
  <div class="row s" style="top:47px"><svg class="np"><use href="#np"/></svg><svg class="ar" style="left:20.5px;top:1.5px"><use href="#bk"/></svg><span class="c1">21163B</span><span class="c2">21163-2144</span><span class="c3">STARTER-ELECTRIC</span><span class="c4">1</span></div>
  <div class="row g" style="top:65px"><svg class="np"><use href="#np"/></svg><span class="c1">27010</span><span class="c2">27010-2122</span><span class="c3">SWITCH</span><span class="c4">0</span><span class="c5">Substitute part, supplied until the stock is exhausted.</span></div>
  <div class="row w" style="top:83px"><svg class="np"><use href="#np"/></svg><span class="c1">27010B</span><span class="c2">27010-7005</span><span class="c3">SWITCH</span><span class="c4">1</span></div>
  <div class="row g" style="top:101px"><svg class="np"><use href="#np"/></svg><svg class="ar" style="left:20.5px;top:1.5px"><use href="#bk"/></svg><span class="c1">32085</span><span class="c2">32085-2097</span><span class="c3">STOPPER</span><span class="c4">1</span></div>
</div>
</body>
</html>
